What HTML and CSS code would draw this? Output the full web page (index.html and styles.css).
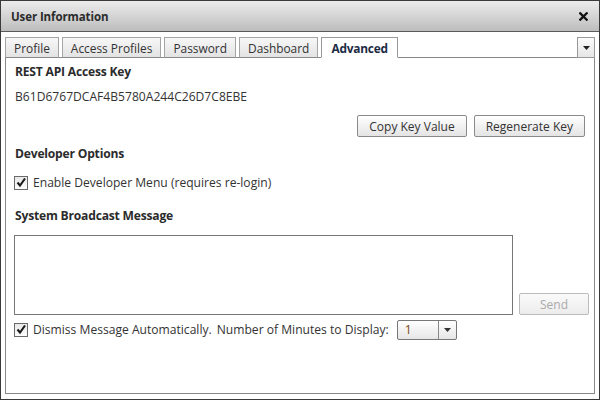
FILE: index.html
```html
<!DOCTYPE html>
<html>
<head>
<meta charset="utf-8">
<link rel="stylesheet" href="styles.css">
</head>
<body>
<div class="window">
  <div class="titlebar">
    <span class="title">User Information</span>
    <svg class="close" width="9" height="9" viewBox="0 0 9 9"><path d="M1.3 1.3 L7.7 7.7 M7.7 1.3 L1.3 7.7" stroke="#111" stroke-width="2.3" stroke-linecap="square"/></svg>
  </div>
  <div class="wbody">
    <div class="tabstrip">
      <div class="tab">Profile</div>
      <div class="tab">Access Profiles</div>
      <div class="tab">Password</div>
      <div class="tab">Dashboard</div>
      <div class="tab active">Advanced</div>
      <div class="spacer"></div>
      <div class="tabmenu"><svg width="7" height="4" viewBox="0 0 7 4"><path d="M0 0 H7 L3.5 4 Z" fill="#222"/></svg></div>
    </div>
    <div class="panel">
      <div class="heading first">REST API Access Key</div>
      <div class="keyline">B61D6767DCAF4B5780A244C26D7C8EBE</div>
      <div class="btnrow">
        <button class="btn">Copy Key Value</button>
        <button class="btn">Regenerate Key</button>
      </div>
      <div class="heading dev">Developer Options</div>
      <label class="checkrow dev-check">
        <span class="cbox"><svg width="12" height="12" viewBox="0 0 12 12"><path d="M2.5 5.5 L5 8.5 L10 1.5" fill="none" stroke="#1a1a1a" stroke-width="2.1"/></svg></span>
        <span>Enable Developer Menu (requires re-login)</span>
      </label>
      <div class="heading sys">System Broadcast Message</div>
      <div class="msgrow">
        <div class="msgbox"></div>
        <button class="btn send">Send</button>
      </div>
      <label class="checkrow dismiss">
        <span class="cbox"><svg width="12" height="12" viewBox="0 0 12 12"><path d="M2.5 5.5 L5 8.5 L10 1.5" fill="none" stroke="#1a1a1a" stroke-width="2.1"/></svg></span>
        <span>Dismiss Message Automatically.</span>
        <span class="minutes">Number of Minutes to Display:</span>
        <span class="select"><span class="selval">1</span><span class="selarrow"><svg width="7" height="4" viewBox="0 0 7 4"><path d="M0 0 H7 L3.5 4 Z" fill="#333"/></svg></span></span>
      </label>
    </div>
  </div>
</div>
</body>
</html>
```
FILE: styles.css
```css
* { box-sizing: border-box; }
html, body { margin: 0; padding: 0; background: #fff; }
body {
  font-family: "Open Sans", "DejaVu Sans", sans-serif;
  font-size: 12.1px;
  color: #333;
}
.window {
  width: 600px;
  height: 400px;
  border: 1px solid #3a3a3a;
  display: flex;
  flex-direction: column;
  background: #fff;
}
.titlebar {
  height: 31px;
  flex: none;
  background: linear-gradient(#ececec, #bdbdbd);
  border-bottom: 1px solid #5a5a5a;
  display: flex;
  align-items: center;
  justify-content: space-between;
  padding: 0 11px 0 10px;
}
.title {
  font-weight: bold;
  font-size: 11.5px;
  letter-spacing: -0.1px;
  color: #2b2b2b;
}
.close { display: block; }
.wbody {
  flex: 1;
  display: flex;
  flex-direction: column;
  padding: 5px 4px 5px 4px;
}
.tabstrip {
  display: flex;
  align-items: flex-end;
  height: 21px;
  flex: none;
  position: relative;
  z-index: 1;
  border-bottom: 1px solid #888;
}
.tab {
  height: 21px;
  margin-right: 3px;
  padding: 0 8px;
  border: 1px solid #a5a5a5;
  border-bottom: 1px solid #888;
  background: linear-gradient(#f7f7f7, #e3e3e3);
  color: #333;
  display: flex;
  align-items: center;
  font-size: 11.9px;
  margin-bottom: -1px;
}
.tab.active {
  background: #fff;
  border-color: #999;
  border-bottom-color: #fff;
  font-weight: bold;
  letter-spacing: -0.2px;
  padding: 0 9px;
  color: #1d2b44;
}
.spacer { flex: 1; }
.tabmenu {
  width: 18px;
  height: 21px;
  margin-bottom: -1px;
  border: 1px solid #999;
  background: linear-gradient(#fbfbfb, #e6e6e6);
  display: flex;
  align-items: center;
  justify-content: center;
}
.tabmenu svg { display: block; }
.panel {
  flex: 1;
  border: 1px solid #888;
  border-top: none;
  padding: 0 9px;
  display: flex;
  flex-direction: column;
}
.heading {
  font-weight: bold;
  line-height: 16px;
  letter-spacing: -0.2px;
  color: #2b2b2b;
}
.heading.first { margin-top: 6px; }
.keyline { margin-top: 9px; line-height: 16px; }
.btnrow {
  margin-top: 10px;
  display: flex;
  justify-content: flex-end;
  gap: 7px;
}
.btn {
  font-family: inherit;
  font-size: 12px;
  color: #333;
  height: 22px;
  padding: 0 11px;
  border: 1px solid #8a8a8a;
  border-radius: 2px;
  background: linear-gradient(#ffffff, #e4e4e4);
  cursor: default;
}
.heading.dev { margin-top: 9px; }
.checkrow {
  display: flex;
  align-items: center;
  line-height: 16px;
}
.dev-check { margin-top: 13px; }
.cbox {
  width: 14px;
  height: 14px;
  flex: none;
  border: 1px solid #6a6a6a;
  background: linear-gradient(#e8e8e8, #fdfdfd);
  margin-left: -1px;
  margin-right: 5px;
  display: flex;
  align-items: center;
  justify-content: center;
}
.cbox svg { display: block; }
.heading.sys { margin-top: 17px; }
.msgrow {
  margin-top: 11px;
  display: flex;
  align-items: flex-end;
}
.msgbox {
  flex: none;
  width: 499px;
  height: 80px;
  margin-left: -1px;
  border: 1px solid #777;
  background: #fff;
}
.btn.send {
  flex: none;
  margin-left: 6px;
  width: 70px;
  color: #aaa;
  border-color: #bbb;
  background: linear-gradient(#fafafa, #ececec);
}
.dismiss { margin-top: 5px; height: 20px; }
.minutes { margin-left: 5px; }
.select {
  margin-left: 8px;
  width: 60px;
  height: 20px;
  flex: none;
  border: 1px solid #777;
  border-radius: 2px;
  background: linear-gradient(#ffffff, #e6e6e6);
  display: flex;
}
.selval {
  flex: 1;
  padding-left: 7px;
  color: #7a4a10;
  display: flex;
  align-items: center;
}
.selarrow {
  width: 18px;
  border-left: 1px solid #888;
  display: flex;
  align-items: center;
  justify-content: center;
}
.selarrow svg { display: block; }
```
